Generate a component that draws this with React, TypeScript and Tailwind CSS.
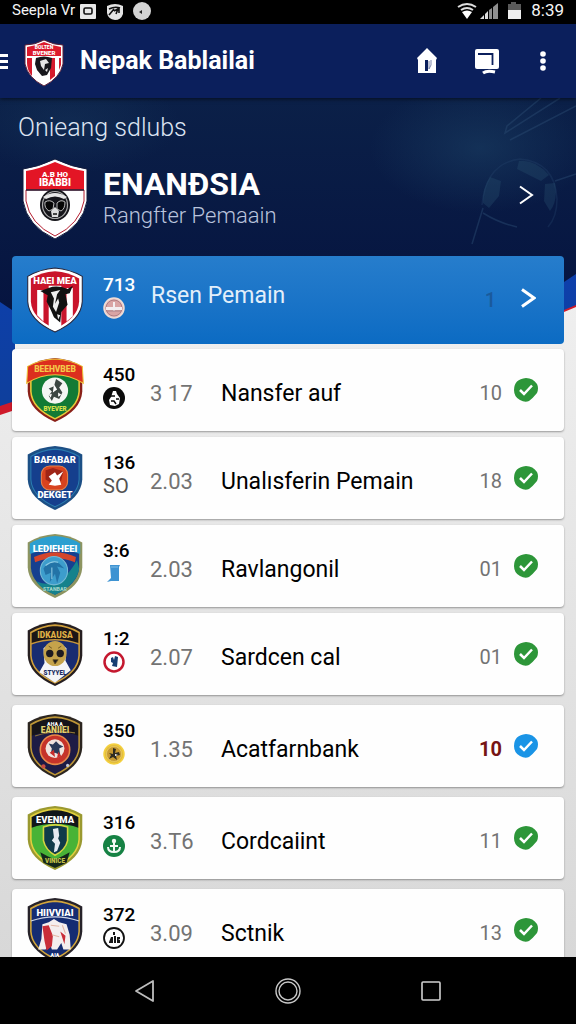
import type { ReactNode } from 'react';

interface Club {
  name: string;
  rating: string;
  odds: string;
  count: string;
  crest: ReactNode;
  badge: ReactNode;
  live?: boolean;
  spaced?: boolean;
}

const SHIELD = 'M28 1 Q42 2 54 9 V33 Q53 51 28 62 Q3 51 2 33 V9 Q14 2 28 1Z';
const INNER = 'M28 4 Q41 5 51 11 V33 Q50 49 28 59 Q6 49 5 33 V11 Q15 5 28 4Z';
const TOP = 'M28 4 Q41 5 51 11 V22 Q28 14 5 22 V11 Q15 5 28 4Z';

function CrestText({ y, size = 8, fill = '#fff', children }: { y: number; size?: number; fill?: string; children: string }) {
  return (
    <text x="28" y={y} fontSize={size} fontWeight="900" textAnchor="middle" fill={fill} fontFamily="Roboto, sans-serif">
      {children}
    </text>
  );
}

function Crest({ outer, edge, children }: { outer: string; edge: string; children: ReactNode }) {
  return (
    <svg viewBox="2 1 52 61" className="h-16 w-14 shrink-0 overflow-visible" aria-hidden="true">
      <path d={SHIELD} fill={outer} />
      <path d={INNER} fill={edge} />
      {children}
    </svg>
  );
}

function BullCrest() {
  return (
    <Crest outer="#fff" edge="#c9142b">
      <path d={SHIELD} fill="none" stroke="#26243a" strokeWidth="1" />
      <path d="M11 22h6v30l-6-6z M22 18h12v39l-6 3-6-3z M39 20h6v27l-6 5z" fill="#fff" />
      <path d="M14 23 L22 20 Q30 17 40 21 L45 18 L42 25 L38 26 L40 36 L34 43 L33 53 L27 48 L24 41 L20 33 L21 27Z" fill="#111" />
      <path d="M24 24l9-2-3 4-2 9 3-5 1 4-3 9-3-5 1-8z M30 45l3 1-2 4z" fill="#eee" />
      <CrestText y={16} size={9}>HAEI MEA</CrestText>
    </Crest>
  );
}

function HeroCrest() {
  return (
    <svg viewBox="0 0 66 82" className="mb-1 h-[82px] w-[66px] shrink-0" aria-hidden="true">
      <path d="M33 1 Q50 9 65 11 V43 Q61 68 33 81 Q5 68 1 43 V11 Q16 9 33 1Z" fill="#fff" stroke="#111b3c" />
      <path d="M33 4 Q49 11 62 13 V32 H4 V13 Q17 11 33 4Z" fill="#e31525" />
      <path d="M4 32H62V43Q58 66 33 78Q8 66 4 43Z" fill="#fff" stroke="#b51e30" />
      <path d="M4 32H62" stroke="#29233a" strokeWidth="1.5" />
      <text x="33" y="19" fontSize="8" fontWeight="900" textAnchor="middle" fill="#fff" fontFamily="Roboto, sans-serif">A.B HO</text>
      <text x="33" y="28" fontSize="10" fontWeight="900" textAnchor="middle" fill="#fff" fontFamily="Roboto, sans-serif">IBABBI</text>
      <ellipse cx="33" cy="47" rx="15" ry="16" fill="#15151a" />
      <ellipse cx="33" cy="47" rx="12.5" ry="13.5" fill="none" stroke="#aaa" strokeWidth="1.2" />
      <path d="M21 39 Q33 31 45 39 L42 41 Q33 36 24 41Z" fill="#e6e6e6" />
      <path d="M23 44 Q28 41 32 45 L31 51 L27 53 Q22 50 23 44Z M35 45 Q39 41 43 44 Q43 51 39 53 L35 51Z" fill="#050505" stroke="#bbb" strokeWidth="1" />
      <path d="M29 53 L33 49 L37 53 L36 59 H30Z" fill="#ddd" />
      <path d="M31 56h4" stroke="#111" strokeWidth="1.5" />
    </svg>
  );
}

function HeaderCrest() {
  return (
    <svg viewBox="0 0 40 48" className="mt-1 h-12 w-10" aria-hidden="true">
      <path d="M20 1 Q30 6 39 6 V25 Q36 39 20 47 Q4 39 1 25 V6 Q11 6 20 1Z" fill="#fff" stroke="#5c2039" />
      <path d="M20 3 Q29 7 37 8 V17 H3 V8 Q12 7 20 3Z" fill="#dc1b2c" />
      <path d="M3 19h5v18q-5-6-5-13z M26 19h5v18l-5 4z M35 19h2v7l-2 5z" fill="#d51b2d" />
      <text x="20" y="10" fontSize="5" fontWeight="900" textAnchor="middle" fill="#fff" fontFamily="Roboto, sans-serif">BOLTEN</text>
      <text x="20" y="16" fontSize="6" fontWeight="900" textAnchor="middle" fill="#fff" fontFamily="Roboto, sans-serif">BVENER</text>
      <path d="M12 19 Q20 16 28 19 L27 29 L23 36 L18 37 L13 31 L11 25Z" fill="#17171c" />
      <path d="M16 22 L22 20 L25 24 L21 25 L20 31 L17 27Z M21 31l3-2-1 4z" fill="#e6e6e6" />
    </svg>
  );
}

const clubs: Club[] = [
  {
    name: 'Nansfer auf',
    rating: '450',
    odds: '3 17',
    count: '10',
    crest: (
      <Crest outer="#8a2018" edge="#127a35">
        <path d={INNER} fill="none" stroke="#e9c93a" strokeWidth="1.5" />
        <path d="M28 2 Q43 3 54 9 L55 25 Q28 9 1 25 L2 9 Q13 3 28 2Z" fill="#dc2f1e" stroke="#efc33a" strokeWidth="1" />
        <circle cx="28" cy="32" r="12.5" fill="#f4f6f4" />
        <path d="M29 21l6 4-3 4 3 5-3 6-5-2-2 4-3-5 3-4-3-3 5-2z" fill="#3b4642" />
        <path d="M27 26l3 5-4 3z M31 34l3 2-3 2z M22 36l3-1-1 4z" fill="#fff" />
        <CrestText y={14} size={8} fill="#f4c84a">BEEHVBEB</CrestText>
        <CrestText y={52} size={6} fill="#d9e24a">BYEVER</CrestText>
      </Crest>
    ),
    badge: (
      <svg viewBox="0 0 22 22" className="size-[22px]" aria-hidden="true">
        <circle cx="11" cy="11" r="11" fill="#0b0b0b" />
        <path d="M10 4h3l1 3 3 4-1 6-4 2-5-1-1-5 2-3z" fill="#fff" />
        <path d="M8 9h4 M13 12h3 M8 14h3l2 3" stroke="#0b0b0b" strokeWidth="1.5" fill="none" />
      </svg>
    ),
  },
  {
    name: 'Unalısferin Pemain',
    rating: '136',
    odds: '2.03',
    count: '18',
    crest: (
      <Crest outer="#1c4f85" edge="#153f8d">
        <path d={INNER} fill="none" stroke="#2a7bb0" strokeWidth="1" />
        <rect x="15" y="20" width="25" height="23" rx="8" fill="#d8431f" stroke="#e8854a" />
        <path d="M19 24l7-2 10 3-2 9-8 3-7-4z" fill="#9f2517" />
        <path d="M22 30l6-4 2 3 6-4-4 7 2 6-6 1-6-1 3-4z" fill="#fff" />
        <CrestText y={17} size={9}>BAFABAR</CrestText>
        <CrestText y={51} size={9}>DEKGET</CrestText>
      </Crest>
    ),
    badge: <span className="text-xl leading-[22px] text-neutral-600">SO</span>,
  },
  {
    name: 'Ravlangonil',
    rating: '3:6',
    odds: '2.03',
    count: '01',
    crest: (
      <Crest outer="#8d9460" edge="#16408f">
        <path d="M28 3 Q42 4 52 10 V20 Q28 11 4 20 V10 Q14 4 28 3Z" fill="#2b9fd0" />
        <path d="M49 26 L51 34 Q49 49 28 59 Q15 54 10 46 Q32 56 49 26Z" fill="#15828c" />
        <path d="M8 23 Q28 14 48 23 L47 28 Q28 20 9 28Z" fill="#d4452b" />
        <ellipse cx="27" cy="36" rx="13" ry="13.5" fill="#3d9dcc" stroke="#76b9d4" />
        <path d="M17 34q6-9 15-5l5 5-7-2 3 6-3 10-2-9-5 8 1-9-5 2z" fill="#2373a7" />
        <path d="M19 31q6-5 12-3 M25 33v11" stroke="#92cce4" fill="none" />
        <CrestText y={18} size={9}>LEDIEHEEI</CrestText>
        <CrestText y={55} size={5} fill="#9ed4c8">STANBAR</CrestText>
      </Crest>
    ),
    badge: (
      <svg viewBox="0 0 22 22" className="size-[22px]" aria-hidden="true">
        <path d="M7 2h10l-1 2v14H8l-4 1 4-4z" fill="#3e93d2" />
        <path d="M8 4h7" stroke="#7fbde6" />
      </svg>
    ),
  },
  {
    name: 'Sardcen cal',
    rating: '1:2',
    odds: '2.07',
    count: '01',
    crest: (
      <Crest outer="#251e20" edge="#182c71">
        <path d={TOP} fill="#1b1516" />
        <path d={INNER} fill="none" stroke="#d1a03b" strokeWidth="1.5" />
        <path d="M5 22Q28 14 51 22" fill="none" stroke="#c6963a" strokeWidth="1.5" />
        <path d="M17 26 Q28 16 39 26 L38 38 L43 47 L28 59 L13 49 L18 40Z" fill="#f4f5f7" />
        <ellipse cx="28" cy="31" rx="11" ry="12" fill="#c5a34b" />
        <circle cx="23" cy="31" r="3.5" fill="#1d1b20" />
        <circle cx="33" cy="31" r="3.5" fill="#1d1b20" />
        <path d="M26 37h5l-3 4z M22 24l3 2 M34 24l-3 2" fill="#1d1b20" stroke="#5b4a22" strokeWidth="0.8" />
        <CrestText y={16} size={8} fill="#dfae45">IDKAUSA</CrestText>
        <CrestText y={52} size={6} fill="#1b2b63">STYYEL</CrestText>
      </Crest>
    ),
    badge: (
      <svg viewBox="0 0 22 22" className="size-[22px]" aria-hidden="true">
        <circle cx="11" cy="11" r="9.5" fill="#fff" stroke="#c4182f" strokeWidth="2.5" />
        <path d="M8 7l2-1 1 3 1-4 3 1-1 10-5-1 1-3-2-1z" fill="#173f73" />
      </svg>
    ),
    spaced: true,
  },
  {
    name: 'Acatfarnbank',
    rating: '350',
    odds: '1.35',
    count: '10',
    live: true,
    crest: (
      <Crest outer="#2b2520" edge="#1d1b45">
        <path d={TOP} fill="#16141a" />
        <path d={INNER} fill="none" stroke="#bd9637" strokeWidth="1.5" />
        <path d="M9 22Q28 16 47 19" fill="none" stroke="#8e7436" />
        <circle cx="28" cy="35" r="14" fill="#c5332a" stroke="#e88a4a" strokeWidth="1.5" />
        <circle cx="28" cy="34" r="9" fill="#f0e4df" />
        <path d="M22 29l4 1 3-3 3 3 4 2-4 2 1 6-5-2-4 1 1-5z" fill="#293a59" />
        <path d="M23 38l4-3 1 7z M31 37l3 4-4 2z" fill="#c72c2b" />
        <circle cx="17" cy="51" r="2" fill="#c94c43" />
        <circle cx="40" cy="50" r="1.5" fill="#c5cad8" />
        <CrestText y={12} size={5}>AHA A</CrestText>
        <CrestText y={19} size={8} fill="#e2cf70">EANIIEI</CrestText>
      </Crest>
    ),
    badge: (
      <svg viewBox="0 0 22 22" className="size-[22px]" aria-hidden="true">
        <circle cx="11" cy="11" r="10" fill="#e3bd3c" stroke="#f4d03f" strokeWidth="1.5" />
        <circle cx="11" cy="11" r="7.5" fill="#c79a31" stroke="#f0dc8a" strokeWidth="0.5" />
        <path d="M10 5l3 1-1 4 4-1 1 3-4 1 1 4-4-3-4 2 2-4-2-2 4 1z" fill="#2e2c20" />
        <path d="M12 11l3 1-3 1z" fill="#fff" />
      </svg>
    ),
    spaced: true,
  },
  {
    name: 'Cordcaiint',
    rating: '316',
    odds: '3.T6',
    count: '11',
    crest: (
      <Crest outer="#9a9930" edge="#48b336">
        <path d={TOP} fill="#11161a" />
        <path d={INNER} fill="none" stroke="#e1cf3d" strokeWidth="1.5" />
        <path d="M17 21 Q28 17 40 21 V34 Q38 43 28 48 Q19 43 17 34Z" fill="#103b49" stroke="#d4d541" strokeWidth="1.5" />
        <path d="M26 23l5-1 1 7-1 3 2 4-3 8-3 1 1-8-3-3 2-3z" fill="#e4ebf1" />
        <path d="M14 45l7 4 7 3 7-3 7-4-3 10-11 5-11-5z" fill="#14261a" />
        <CrestText y={17} size={9}>EVENMA</CrestText>
        <CrestText y={55} size={6} fill="#c8c24a">VINICE</CrestText>
      </Crest>
    ),
    badge: (
      <svg viewBox="0 0 22 22" className="size-[22px]" aria-hidden="true">
        <circle cx="11" cy="11" r="11" fill="#168244" />
        <circle cx="11" cy="6" r="2.2" fill="#f3faf5" />
        <path d="M11 8v8 M5 12q0 5 6 5t6-5 M7 11h8" fill="none" stroke="#f3faf5" strokeWidth="2" />
      </svg>
    ),
    spaced: true,
  },
  {
    name: 'Sctnik',
    rating: '372',
    odds: '3.09',
    count: '13',
    crest: (
      <Crest outer="#262229" edge="#152c72">
        <path d={INNER} fill="none" stroke="#d2a63d" strokeWidth="1.5" />
        <path d="M5 23Q28 15 51 23" fill="none" stroke="#cfd6e6" strokeWidth="1" />
        <path d="M16 26l6-2 5-3 5 3 7 2 3 10 1 14h-7l-2-6-4 6h-5l-2-6-4 6h-7l3-10z" fill="#f4eeee" />
        <path d="M16 28l6-1 4 10-1 10-5 4-2-9z M33 33l5 4-1 8z" fill="#c92d38" />
        <path d="M24 27l8 1 M25 36l7 2 M35 27l3 8" stroke="#e2b6a6" />
        <CrestText y={18} size={9}>HIIVVIAI</CrestText>
        <CrestText y={57} size={5}>AIA</CrestText>
      </Crest>
    ),
    badge: (
      <svg viewBox="0 0 22 22" className="size-[22px]" aria-hidden="true">
        <circle cx="11" cy="11" r="10" fill="#fff" stroke="#111" strokeWidth="1.8" />
        <path d="M10 5h2v3h-2z M6 15l2-5h2v6H6z M11 9h2v7h-2z M14 10h3v2h-2l2 1v3h-3z" fill="#161616" />
      </svg>
    ),
  },
];

function StatusBar() {
  return (
    <div className="flex h-6 shrink-0 items-center bg-black px-3 leading-5 text-neutral-100">
      <span className="w-[68px] whitespace-nowrap pb-1 text-[15px]">Seepla Vr</span>
      <svg viewBox="0 0 72 20" className="h-5 w-[72px]" aria-hidden="true">
        <rect x="0" y="2" width="16" height="15" rx="1" fill="#e9e9e9" />
        <rect x="4" y="6" width="8" height="6" rx="1.5" fill="none" stroke="#111" strokeWidth="1.6" />
        <path d="M27 4q8-4 16 0v8q-2 6-8 6-7-1-8-7z" fill="#e3e3e3" />
        <path d="M29 7q6-3 11-1 M29 13l5-6 M34 9l4-2-2 5 M39 6v5" stroke="#111" strokeWidth="1.6" fill="none" />
        <circle cx="62" cy="9" r="9" fill="#d3d3d3" />
        <path d="M59 10l3-2v4z" fill="#222" />
      </svg>
      <svg viewBox="0 0 66 20" className="ml-auto h-5 w-[66px]" aria-hidden="true">
        <g fill="none" stroke="#ddd" strokeWidth="2">
          <path d="M1 5q9-6 18 0" />
          <path d="M4 8q6-4 12 0" />
        </g>
        <path d="M5 10q5-3 10 0l-5 7z" fill="#fff" />
        <path d="M23 17l4-4v4z M28 12l3-3v8h-3z" fill="#ddd" />
        <path d="M32 8l3-2v11h-3z M36 5l5-4v16h-5z" fill="#8f8f8f" />
        <path d="M51 2h3V0h5v2h5v7H51z" fill="#5a5a5a" />
        <path d="M51 8h13v9H51z" fill="#eee" />
      </svg>
      <span className="ml-2 pb-1 text-[17px]">8:39</span>
    </div>
  );
}

function AppHeader() {
  return (
    <header className="relative z-10 flex h-[74px] shrink-0 items-center bg-[#0b1f5c] pr-[17px] shadow-[0_1px_4px_rgba(0,0,0,0.6)]">
      <button aria-label="Menu" className="flex w-2 flex-col gap-[3px]">
        <span className="h-[3px] w-2 bg-white" />
        <span className="h-[3px] w-2 bg-white" />
        <span className="h-[3px] w-2 bg-white" />
      </button>
      <div className="ml-4">
        <HeaderCrest />
      </div>
      <h1 className="ml-4 flex-1 whitespace-nowrap text-[25px] font-bold text-white">Nepak Bablailai</h1>
      <button aria-label="Home" className="flex size-8 items-center justify-center">
        <svg viewBox="0 0 20 26" className="h-[26px] w-5">
          <path d="M10 0L20 10l-1 2v13H1V12l-1-2z" fill="#fff" />
          <path d="M8 12h3v11H8z" fill="#0b1f5c" />
          <path d="M12 13v8l2-4v-5" fill="none" stroke="#7c86ab" strokeWidth="1" />
        </svg>
      </button>
      <button aria-label="Messages" className="ml-7 flex size-8 items-center justify-center">
        <svg viewBox="0 0 26 27" className="h-[27px] w-[26px]">
          <path d="M3 1h20q2 0 2 2v16q0 2-2 2H3q-2 0-2-2V3q0-2 2-2z" fill="#fff" />
          <path d="M4 6h14.500v11" fill="none" stroke="#0b1f5c" strokeWidth="1.800" />
          <path d="M9 25q4-3 12-1" fill="none" stroke="#fff" strokeWidth="3" />
        </svg>
      </button>
      <button aria-label="More options" className="ml-6 flex size-8 items-center justify-center">
        <svg viewBox="0 0 6 20" className="h-5 w-1.5" fill="#fff">
          <circle cx="3" cy="3" r="2.800" />
          <circle cx="3" cy="10" r="2.800" />
          <circle cx="3" cy="17" r="2.800" />
        </svg>
      </button>
    </header>
  );
}

function Backdrop() {
  return (
    <svg viewBox="0 0 576 320" preserveAspectRatio="none" className="absolute inset-x-0 top-0 h-80 w-full" aria-hidden="true">
      <defs>
        <linearGradient id="night" x1="0" y1="0" x2="0" y2="1">
          <stop offset="0" stopColor="#0b2048" />
          <stop offset="1" stopColor="#061440" />
        </linearGradient>
        <linearGradient id="rim" x1="0" y1="0" x2="0" y2="1">
          <stop offset="0" stopColor="#0d3fc0" />
          <stop offset="1" stopColor="#0e3f9c" />
        </linearGradient>
        <radialGradient id="haze">
          <stop offset="0" stopColor="#1d4468" stopOpacity="0.5" />
          <stop offset="1" stopColor="#1d4468" stopOpacity="0" />
        </radialGradient>
      </defs>
      <path d="M0 0H576V209L564 214L540 230H15V312L0 317Z" fill="#cf1a2a" />
      <path d="M0 0H576V207L564 212L540 226H15V303L0 308Z" fill="url(#rim)" />
      <path d="M0 0H576V176L564 184L540 200H60L12 212L0 204Z" fill="url(#night)" />
      <ellipse cx="480" cy="50" rx="110" ry="65" fill="url(#haze)" />
      <ellipse cx="70" cy="25" rx="110" ry="50" fill="url(#haze)" opacity="0.6" />
      <g fill="none" stroke="#28486f" strokeWidth="1.500" opacity="0.5">
        <path d="M541 0L507 28L505 35L560 0" />
        <path d="M510 42L576 8" />
        <path d="M483 110L472 146 M483 115q16 10 34 14 M555 83l21-7" />
        <path d="M520 61q35 3 37 40q0 18-9 28 M520 61q-34 4-38 46" opacity="0.6" />
      </g>
      <g fill="#28506f" opacity="0.35">
        <path d="M519 63q16-2 30 14l-8 6-24-12z" />
        <path d="M490 79l11 4-2 15-10 12-6-5q-1-14 7-26z" />
        <path d="M545 86l10-1q3 18-5 28l-6-10z" />
      </g>
    </svg>
  );
}

function ChevronRight({ width }: { width: number }) {
  return (
    <svg viewBox="0 0 16 20" className="h-5 w-4 shrink-0" fill="none" stroke="#fff" strokeWidth={width} aria-hidden="true">
      <path d="M2 1.500L14 10L2 18.500" />
    </svg>
  );
}

function CheckMark({ live }: { live?: boolean }) {
  return (
    <svg viewBox="0 0 24 24" className="size-6 shrink-0" aria-hidden="true">
      <path d="M12 0Q19 0 23 6Q25 10 23 15Q19 20 15 23Q11 25 6 22Q0 19 0 12Q0 1 12 0Z" fill={live ? '#1a94e6' : '#2d9639'} />
      <path d="M6 12l4 4L18 7.500" fill="none" stroke="#fff" strokeWidth="2.500" />
    </svg>
  );
}

function ClubRow({ club }: { club: Club }) {
  return (
    <li className={club.spaced ? 'mb-2.5' : 'mb-1.5'}>
      <button className="flex h-[82px] w-full items-center rounded bg-[#fefefe] pl-[15px] pr-[26px] text-left shadow-[0_1px_2px_rgba(0,0,0,0.35)]">
        {club.crest}
        <span className="ml-5 flex w-[47px] shrink-0 flex-col items-start pb-2">
          <span className="text-[19px] font-medium leading-6 text-black">{club.rating}</span>
          {club.badge}
        </span>
        <span className="w-[71px] shrink-0 pt-2 text-[22px] leading-7 text-neutral-500">{club.odds}</span>
        <span className="flex-1 whitespace-nowrap pt-2 text-[23px] leading-7 text-black">{club.name}</span>
        <span
          className={
            club.live
              ? 'mr-3 pt-1.5 text-xl font-bold leading-7 text-[#761414]'
              : 'mr-3 pt-1.5 text-xl leading-7 text-neutral-500'
          }
        >
          {club.count}
        </span>
        <CheckMark live={club.live} />
      </button>
    </li>
  );
}

function NavBar() {
  return (
    <nav className="relative z-10 flex h-[67px] shrink-0 items-center justify-center gap-[118px] bg-black">
      <button aria-label="Back">
        <svg viewBox="0 0 24 24" className="size-6" fill="none" stroke="#bdbdbd" strokeWidth="1.800">
          <path d="M20 2v20L3 12z" strokeLinejoin="round" />
        </svg>
      </button>
      <button aria-label="Home">
        <svg viewBox="0 0 26 26" className="size-[26px]" fill="none" stroke="#c8c8c8" strokeWidth="1.400">
          <circle cx="13" cy="13" r="12" />
          <circle cx="13" cy="13" r="9" />
        </svg>
      </button>
      <button aria-label="Recent apps">
        <svg viewBox="0 0 24 24" className="size-6" fill="none" stroke="#d0d0d0" strokeWidth="1.600">
          <rect x="3" y="3" width="18" height="18" rx="1" />
        </svg>
      </button>
    </nav>
  );
}

export default function App() {
  return (
    <div className="flex h-screen flex-col overflow-hidden bg-[#dfdfdf] font-[Roboto,sans-serif]">
      <StatusBar />
      <AppHeader />
      <main className="relative min-h-0 flex-1 overflow-hidden bg-linear-to-b from-[#f0f0f0] from-20% to-[#d8d8d8]">
        <Backdrop />
        <div className="relative px-3">
          <h2 className="px-1.5 pt-3 text-[25px] font-light leading-9 text-[#dce4f2]">Onieang sdlubs</h2>
          <button className="flex h-[110px] w-full items-center pl-2.5 pr-[30px] text-left">
            <HeroCrest />
            <span className="ml-[15px] flex-1 whitespace-nowrap pb-0.5">
              <span className="block text-[32px] font-bold leading-8 text-white">ENANĐSIA</span>
              <span className="block text-[22px] font-light leading-8 text-[#b9c3dc]">Rangfter Pemaain</span>
            </span>
            <span className="pb-3">
              <ChevronRight width={2} />
            </span>
          </button>
          <button className="mb-[5px] flex h-[88px] w-full items-center rounded bg-linear-to-b from-[#267dcc] to-[#0b6bc3] pl-[15px] pr-7 text-left">
            <BullCrest />
            <span className="ml-5 flex w-12 shrink-0 flex-col items-start pb-2">
              <span className="text-[19px] font-medium leading-6 text-white">713</span>
              <svg viewBox="0 0 22 22" className="size-[22px]" aria-hidden="true">
                <circle cx="11" cy="11" r="10" fill="#e5c3c2" stroke="#f1ddd5" strokeWidth="1.500" />
                <circle cx="11" cy="11" r="8" fill="#d9a4a4" stroke="#b27d82" />
                <path d="M3 10h16v3H3z M10 5h2v9h-2z" fill="#f3eef0" />
                <path d="M4 14h14" stroke="#a9848b" />
              </svg>
            </span>
            <span className="flex-1 whitespace-nowrap pb-2 text-[23px] leading-8 text-[#e3effa]">Rsen Pemain</span>
            <span className="mr-6 text-xl font-medium leading-8 text-[#1a5a9c]">1</span>
            <span className="pb-1">
              <ChevronRight width={3} />
            </span>
          </button>
          <ul>
            {clubs.map((club) => (
              <ClubRow key={club.name} club={club} />
            ))}
          </ul>
        </div>
      </main>
      <NavBar />
    </div>
  );
}
